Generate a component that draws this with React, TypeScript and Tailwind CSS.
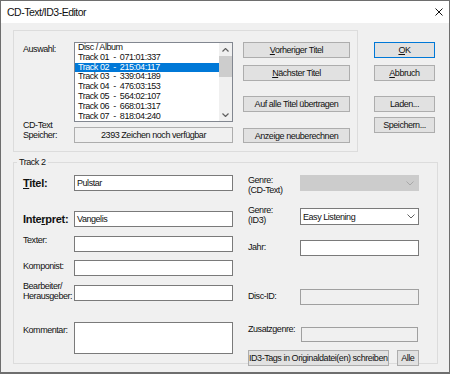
import React from "react";

const Chevron = ({ color }: { color: string }) => (
  <svg width="8" height="5" viewBox="0 0 8 5">
    <polyline points="0.5,0.5 4,4 7.5,0.5" fill="none" stroke={color} strokeWidth="1" />
  </svg>
);

const ArrowUp = () => (
  <svg width="7" height="4" viewBox="0 0 7 4">
    <polyline points="0.5,3.5 3.5,0.5 6.5,3.5" fill="none" stroke="#606060" strokeWidth="1.2" />
  </svg>
);
const ArrowDown = () => (
  <svg width="7" height="4" viewBox="0 0 7 4">
    <polyline points="0.5,0.5 3.5,3.5 6.5,0.5" fill="none" stroke="#606060" strokeWidth="1.2" />
  </svg>
);

function Btn({ className, children }: { className: string; children: React.ReactNode }) {
  return (
    <div className={"flex items-center justify-center bg-[#e1e1e1] border border-[#adadad] whitespace-nowrap " + className}>
      {children}
    </div>
  );
}

const items = [
  "Disc / Album",
  "Track 01  -  071:01:337",
  "Track 02  -  215:04:117",
  "Track 03  -  339:04:189",
  "Track 04  -  476:03:153",
  "Track 05  -  564:02:107",
  "Track 06  -  668:01:317",
  "Track 07  -  818:04:240",
];

export default function App() {
  return (
    <div className="w-[450px] h-[374px] flex flex-col border border-[#6e6e6e] border-b-2 bg-[#f0f0f0] font-['Liberation_Sans',Arial,sans-serif] text-[9px] leading-[10px] tracking-[-0.45px] text-[#111] overflow-hidden">
      {/* Title bar */}
      <div className="h-[22px] shrink-0 bg-white flex items-center justify-between pl-[6px] pr-[6px]">
        <span className="text-[10.5px] tracking-[-0.5px]">CD-Text/ID3-Editor</span>
        <svg width="8" height="8" viewBox="0 0 8 8">
          <line x1="0.5" y1="0.5" x2="7.5" y2="7.5" stroke="#111" strokeWidth="1" />
          <line x1="7.5" y1="0.5" x2="0.5" y2="7.5" stroke="#111" strokeWidth="1" />
        </svg>
      </div>

      {/* Body */}
      <div className="flex-1 pt-[7px] pl-[12px] flex flex-col">
        <div className="flex items-start">
          {/* Group 1 */}
          <div className="w-[345px] h-[122px] border border-[#dcdcdc] pt-[11px] pl-[9px] flex flex-col">
            <div className="flex items-start">
              <div className="w-[51px] pt-[2px]">Auswahl:</div>
              <div className="w-[159px] h-[80px] bg-white border border-[#828790] flex">
                <div className="flex-1 flex flex-col overflow-hidden">
                  {items.map((t, i) => (
                    <div
                      key={i}
                      className={
                        i === 2
                          ? "h-[9.8px] leading-[9.4px] shrink-0 pl-[3px] whitespace-pre bg-[#0078d7] text-white"
                          : "h-[9.8px] leading-[9.4px] shrink-0 pl-[3px] whitespace-pre"
                      }
                    >
                      {t}
                    </div>
                  ))}
                </div>
                <div className="w-[13px] bg-[#f0f0f0] flex flex-col">
                  <div className="h-[13px] flex items-center justify-center">
                    <ArrowUp />
                  </div>
                  <div className="h-[21px] bg-[#cdcdcd]" />
                  <div className="flex-1" />
                  <div className="h-[13px] flex items-center justify-center">
                    <ArrowDown />
                  </div>
                </div>
              </div>
              <div className="ml-[10px] w-[107px] flex flex-col">
                <Btn className="h-[16px]">
                  <span><u>V</u>orheriger Titel</span>
                </Btn>
                <Btn className="h-[16px] mt-[7px]">
                  <span><u>N</u>ächster Titel</span>
                </Btn>
                <Btn className="h-[16px] mt-[15px]">Auf alle Titel übertragen</Btn>
              </div>
            </div>
            <div className="flex items-start mt-[-2px]">
              <div className="w-[51px]">
                CD-Text
                <br />
                Speicher:
              </div>
              <div className="w-[159px] h-[16px] mt-[7px] border border-[#adadad] flex items-center justify-center">
                2393 Zeichen noch verfügbar
              </div>
              <Btn className="ml-[10px] w-[107px] mt-[8px] h-[15px]">Anzeige neuberechnen</Btn>
            </div>
          </div>

          {/* Right buttons */}
          <div className="ml-[16px] mt-[12px] w-[61px] flex flex-col">
            <Btn className="h-[16px] !border-[#0078d7]">
              <span><u>O</u>K</span>
            </Btn>
            <Btn className="h-[16px] mt-[7px]">
              <span><u>A</u>bbruch</span>
            </Btn>
            <Btn className="h-[16px] mt-[15px]">Laden...</Btn>
            <Btn className="h-[16px] mt-[5px]">Speichern...</Btn>
          </div>
        </div>

        {/* Group 2 */}
        <div className="mt-[10px] w-[425px] h-[202px] border border-[#dcdcdc] flex flex-col">
          <div className="-mt-[6px] ml-[3px] px-[2px] w-fit h-[10px] bg-[#f0f0f0]">Track 2</div>
          <div className="flex pl-[9px]">
            {/* Left column */}
            <div className="flex flex-col w-[210px]">
              <div className="flex items-center mt-[8px]">
                <div className="w-[51px] text-[11px] font-bold tracking-[-0.3px]">
                  <u>T</u>itel:
                </div>
                <div className="w-[159px] h-[16px] bg-white border border-[#7a7a7a] pl-[2px] flex items-center">Pulstar</div>
              </div>
              <div className="flex items-center mt-[20px]">
                <div className="w-[51px] text-[11px] font-bold tracking-[-0.3px] whitespace-nowrap">
                  Inte<u>r</u>pret:
                </div>
                <div className="w-[159px] h-[16px] bg-white border border-[#7a7a7a] pl-[2px] flex items-center">Vangelis</div>
              </div>
              <div className="flex items-start mt-[9px]">
                <div className="w-[51px] mt-[-1px]">Texter:</div>
                <div className="w-[159px] h-[16px] bg-white border border-[#7a7a7a]" />
              </div>
              <div className="flex items-start mt-[8px]">
                <div className="w-[51px] mt-[1px]">Komponist:</div>
                <div className="w-[159px] h-[16px] bg-white border border-[#7a7a7a]" />
              </div>
              <div className="flex items-start mt-[9px]">
                <div className="w-[51px] mt-[-4px]">
                  Bearbeiter/
                  <br />
                  Herausgeber:
                </div>
                <div className="w-[159px] h-[16px] bg-white border border-[#7a7a7a]" />
              </div>
              <div className="flex items-start mt-[21px]">
                <div className="w-[51px] mt-[3px]">Kommentar:</div>
                <div className="w-[159px] h-[32px] bg-white border border-[#7a7a7a]" />
              </div>
            </div>

            {/* Right column */}
            <div className="flex flex-col ml-[15px] w-[171px]">
              <div className="flex items-start mt-[8px]">
                <div className="w-[52px]">
                  Genre:
                  <br />
                  (CD-Text)
                </div>
                <div className="w-[119px] h-[16px] bg-[#cccccc] border border-[#cccccc] flex items-center justify-end pr-[4px]">
                  <Chevron color="#a8a8a8" />
                </div>
              </div>
              <div className="flex items-start mt-[13px]">
                <div className="w-[52px] mt-[-3px]">
                  Genre:
                  <br />
                  (ID3)
                </div>
                <div className="w-[119px] h-[17px] bg-white border border-[#7a7a7a] flex items-center justify-between pl-[2px] pr-[3px]">
                  <span>Easy Listening</span>
                  <Chevron color="#606060" />
                </div>
              </div>
              <div className="flex items-start mt-[15px]">
                <div className="w-[52px] mt-[2px]">Jahr:</div>
                <div className="w-[119px] h-[16px] bg-white border border-[#7a7a7a]" />
              </div>
              <div className="flex items-start mt-[33px]">
                <div className="w-[52px] mt-[2px]">Disc-ID:</div>
                <div className="w-[119px] h-[16px] bg-[#f0f0f0] border border-[#a0a0a0]" />
              </div>
              <div className="flex items-start mt-[22px]">
                <div className="w-[52px] mt-[-3px]">Zusatzgenre:</div>
                <div className="ml-[1px] w-[117px] h-[15px] bg-[#f0f0f0] border border-[#a0a0a0]" />
              </div>
              <div className="flex items-start mt-[8px]">
                <Btn className="w-[146px] h-[16px]">ID3-Tags in Originaldatei(en) schreiben</Btn>
                <Btn className="ml-[8px] w-[29px] h-[16px]">Alle</Btn>
              </div>
            </div>
          </div>
        </div>
      </div>
    </div>
  );
}
